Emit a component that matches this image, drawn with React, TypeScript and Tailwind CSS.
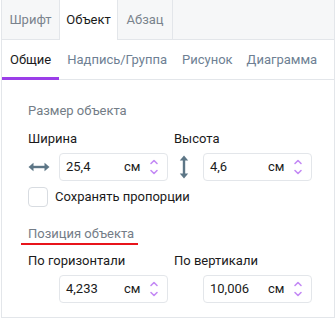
import React from "react";

const font = { fontFamily: 'Roboto, "Noto Sans", sans-serif' };

function Spinner() {
  return (
    <svg width="10" height="20" viewBox="0 0 10 20" fill="none" stroke="#c48af5" strokeWidth="1.6" strokeLinecap="round" strokeLinejoin="round">
      <path d="M2 6.5 L5 3.5 L8 6.5" />
      <path d="M2 13.5 L5 16.5 L8 13.5" />
    </svg>
  );
}

function NumInput({ value }: { value: string }) {
  return (
    <div className="flex h-[28px] w-[109px] items-center rounded-[4px] border border-[#e3e6ea] bg-white pl-[6px] pr-[8px]">
      <span className="w-[58px] text-[13px] text-[#1b1b1b]">{value}</span>
      <span className="text-[13px] text-[#1b1b1b]">см</span>
      <span className="ml-auto flex items-center"><Spinner /></span>
    </div>
  );
}

function HArrow() {
  return (
    <svg width="22" height="10" viewBox="0 0 22 10" fill="#5d7686">
      <rect x="4" y="3.8" width="14" height="2.4" />
      <path d="M0.5 5 L5.5 0.8 L5.5 9.2 Z" />
      <path d="M21.5 5 L16.5 0.8 L16.5 9.2 Z" />
    </svg>
  );
}

function VArrow() {
  return (
    <svg width="10" height="24" viewBox="0 0 10 24" fill="#5d7686">
      <rect x="3.8" y="4" width="2.4" height="16" />
      <path d="M5 0.5 L0.8 5.5 L9.2 5.5 Z" />
      <path d="M5 23.5 L0.8 18.5 L9.2 18.5 Z" />
    </svg>
  );
}

export default function App() {
  return (
    <div className="h-[318px] w-[336px] bg-white" style={font}>
      <div className="ml-[1px] flex h-[318px] w-[334px] flex-col border-x border-b border-[#e3e6ea]">
        {/* top tabs */}
        <div className="flex h-[40px] border-b border-[#e3e6ea] bg-[#f6f7f8]">
          <div className="flex w-[57px] items-center justify-center whitespace-nowrap text-[13px] text-[#7a838d]">Шрифт</div>
          <div className="-mb-[1px] flex w-[59px] items-center justify-center whitespace-nowrap border-x border-[#e3e6ea] bg-white text-[13px] text-[#1b1b1b]">Объект</div>
          <div className="flex w-[55px] items-center justify-center whitespace-nowrap border-r border-[#e3e6ea] text-[13px] text-[#7a838d]">Абзац</div>
        </div>
        {/* sub tabs */}
        <div className="flex h-[40px] border-b border-[#e3e6ea] whitespace-nowrap">
          <div className="relative flex items-center px-[8px] text-[13px] text-[#1b1b1b]">
            Общие
            <div className="absolute bottom-[-1px] left-0 right-0 h-[3px] bg-[#9b3ee8]" />
          </div>
          <div className="flex items-center px-[8px] text-[13px] text-[#6e7f93]">Надпись/Группа</div>
          <div className="flex items-center px-[7px] text-[13px] text-[#6e7f93]">Рисунок</div>
          <div className="flex items-center px-[7px] text-[13px] text-[#6e7f93]">Диаграмма</div>
        </div>
        {/* content */}
        <div className="flex flex-col whitespace-nowrap pl-[26px] pt-[22px] text-[13px] leading-[18px]">
          <div className="text-[#747d87]">Размер объекта</div>
          <div className="mt-[10px] flex">
            <div className="w-[146px] text-[#1b1b1b]">Ширина</div>
            <div className="text-[#1b1b1b]">Высота</div>
          </div>
          <div className="mt-[5px] flex items-center">
            <div className="flex w-[31px] items-center"><HArrow /></div>
            <NumInput value="25,4" />
            <div className="ml-[11px] flex w-[24px] items-center"><VArrow /></div>
            <NumInput value="4,6" />
          </div>
          <div className="mt-[6px] flex items-center">
            <div className="h-[20px] w-[20px] rounded-[4px] border border-[#d8dce1] bg-white" />
            <div className="ml-[7px] text-[#1b1b1b]">Сохранять пропорции</div>
          </div>
          <div className="relative mt-[18px] w-fit text-[#747d87]">
            Позиция объекта
            <div className="absolute left-[-7px] top-[18px] h-[2px] w-[117px] bg-[#e8141b]" />
          </div>
          <div className="mt-[9px] flex">
            <div className="w-[146px] text-[#1b1b1b]">По горизонтали</div>
            <div className="text-[#1b1b1b]">По вертикали</div>
          </div>
          <div className="mt-[5px] flex items-center">
            <div className="w-[31px]" />
            <NumInput value="4,233" />
            <div className="ml-[11px] w-[24px]" />
            <NumInput value="10,006" />
          </div>
        </div>
      </div>
    </div>
  );
}
